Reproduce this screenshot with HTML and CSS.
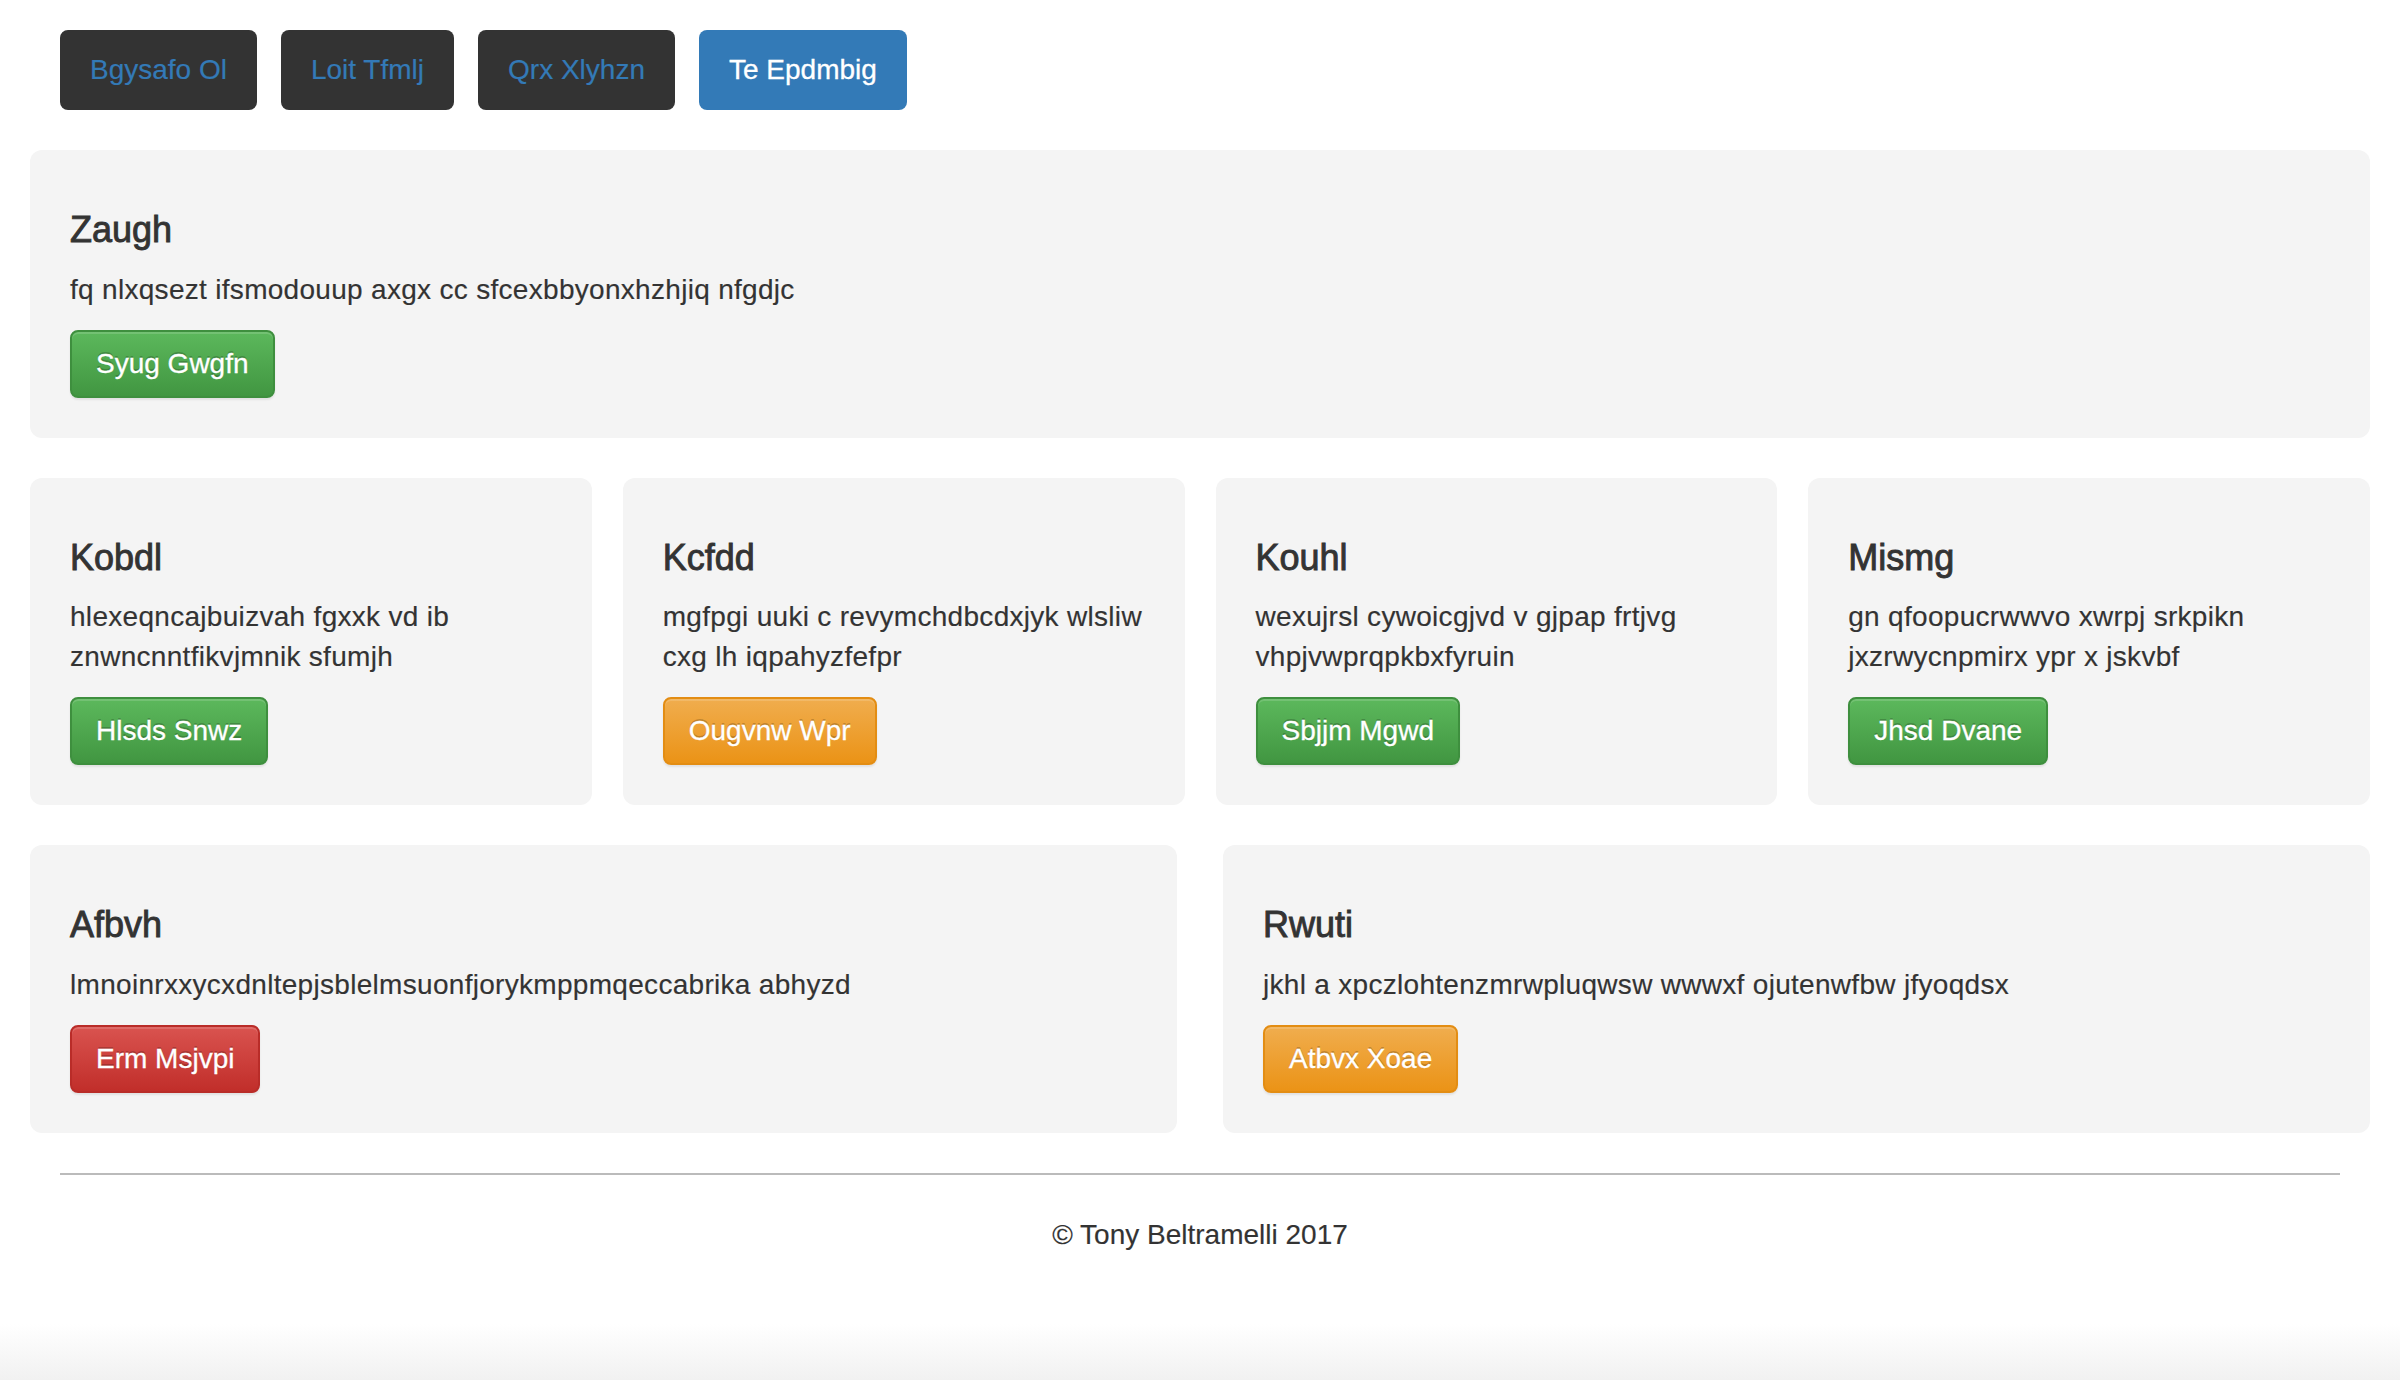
FILE: index.html
```html
<!DOCTYPE html>
<html lang="en">
<head>
<meta charset="utf-8">
<title>Page</title>
<link rel="stylesheet" href="styles.css">
</head>
<body>
<div class="page">
  <header class="header">
    <nav class="nav">
      <a class="nav-btn" href="#">Bgysafo Ol</a>
      <a class="nav-btn" href="#">Loit Tfmlj</a>
      <a class="nav-btn" href="#">Qrx Xlyhzn</a>
      <a class="nav-btn nav-btn-active" href="#">Te Epdmbig</a>
    </nav>
  </header>

  <main class="content">
    <section class="well">
      <h4 class="well-title">Zaugh</h4>
      <p class="well-text">fq nlxqsezt ifsmodouup axgx cc sfcexbbyonxhzhjiq nfgdjc</p>
      <a class="btn btn-success" href="#">Syug Gwgfn</a>
    </section>

    <div class="row row-four">
      <section class="well">
        <h4 class="well-title">Kobdl</h4>
        <p class="well-text">hlexeqncajbuizvah fgxxk vd ib znwncnntfikvjmnik sfumjh</p>
        <a class="btn btn-success" href="#">Hlsds Snwz</a>
      </section>
      <section class="well">
        <h4 class="well-title">Kcfdd</h4>
        <p class="well-text">mgfpgi uuki c revymchdbcdxjyk wlsliw cxg lh iqpahyzfefpr</p>
        <a class="btn btn-warning" href="#">Ougvnw Wpr</a>
      </section>
      <section class="well">
        <h4 class="well-title">Kouhl</h4>
        <p class="well-text">wexujrsl cywoicgjvd v gjpap frtjvg vhpjvwprqpkbxfyruin</p>
        <a class="btn btn-success" href="#">Sbjjm Mgwd</a>
      </section>
      <section class="well">
        <h4 class="well-title">Mismg</h4>
        <p class="well-text">gn qfoopucrwwvo xwrpj srkpikn jxzrwycnpmirx ypr x jskvbf</p>
        <a class="btn btn-success" href="#">Jhsd Dvane</a>
      </section>
    </div>

    <div class="row row-two">
      <section class="well">
        <h4 class="well-title">Afbvh</h4>
        <p class="well-text">lmnoinrxxycxdnltepjsblelmsuonfjorykmppmqeccabrika abhyzd</p>
        <a class="btn btn-danger" href="#">Erm Msjvpi</a>
      </section>
      <section class="well">
        <h4 class="well-title">Rwuti</h4>
        <p class="well-text">jkhl a xpczlohtenzmrwpluqwsw wwwxf ojutenwfbw jfyoqdsx</p>
        <a class="btn btn-warning" href="#">Atbvx Xoae</a>
      </section>
    </div>
  </main>

  <footer class="footer">
    <p class="footer-text">&copy; Tony Beltramelli 2017</p>
  </footer>
</div>
</body>
</html>
```

FILE: styles.css
```css
html {
  min-height: 100%;
  background: linear-gradient(to bottom, #ffffff 0, #ffffff calc(100% - 56px), #f1f1f1 100%);
}

body {
  margin: 0;
  font-family: "Liberation Sans", Helvetica, Arial, sans-serif;
  font-size: 28px;
  line-height: 40px;
  color: #333333;
}

.page {
  padding: 0 30px;
}

.header {
  padding: 30px 30px 0;
}

.nav {
  display: flex;
  gap: 24px;
}

.nav-btn {
  display: block;
  padding: 20px 30px;
  line-height: 40px;
  background: #333333;
  color: #337ab7;
  text-decoration: none;
  border-radius: 8px;
  -webkit-text-stroke: 0.2px #337ab7;
}

.nav-btn-active {
  background: #337ab7;
  color: #ffffff;
  -webkit-text-stroke: 0.3px #ffffff;
}

.content {
  margin-top: 40px;
}

.well {
  background: #f4f4f4;
  border-radius: 12px;
  padding: 40px;
  margin-bottom: 40px;
}

.row {
  display: flex;
}

.row > .well {
  flex: 1 1 0;
  min-width: 0;
}

.row-four {
  gap: 31px;
}

.row-two {
  gap: 46px;
}

.well-title {
  margin: 20px 0 20px;
  font-size: 36px;
  line-height: 1.1;
  font-weight: 500;
  -webkit-text-stroke: 0.9px #333333;
  color: #333333;
}

.well-text {
  margin: 0 0 20px;
  letter-spacing: 0.3px;
  -webkit-text-stroke: 0.15px #333333;
}

.btn {
  display: inline-block;
  padding: 12px 24px;
  line-height: 40px;
  border: 2px solid transparent;
  border-radius: 8px;
  color: #ffffff;
  text-decoration: none;
  text-shadow: 0 -2px 0 rgba(0, 0, 0, 0.2);
  box-shadow: inset 0 2px 0 rgba(255, 255, 255, 0.15), 0 2px 2px rgba(0, 0, 0, 0.075);
  -webkit-text-stroke: 0.3px #ffffff;
}

.btn-success {
  background-image: linear-gradient(to bottom, #5cb85c 0, #419641 100%);
  border-color: #3e8f3e;
}

.btn-warning {
  background-image: linear-gradient(to bottom, #f0ad4e 0, #eb9316 100%);
  border-color: #e38d13;
}

.btn-danger {
  background-image: linear-gradient(to bottom, #d9534f 0, #c12e2a 100%);
  border-color: #b92c28;
}

.footer {
  margin: 0 30px;
  border-top: 2px solid #bbbbbb;
  padding-top: 40px;
}

.footer-text {
  margin: 0;
  text-align: center;
  -webkit-text-stroke: 0.15px #333333;
}
```
